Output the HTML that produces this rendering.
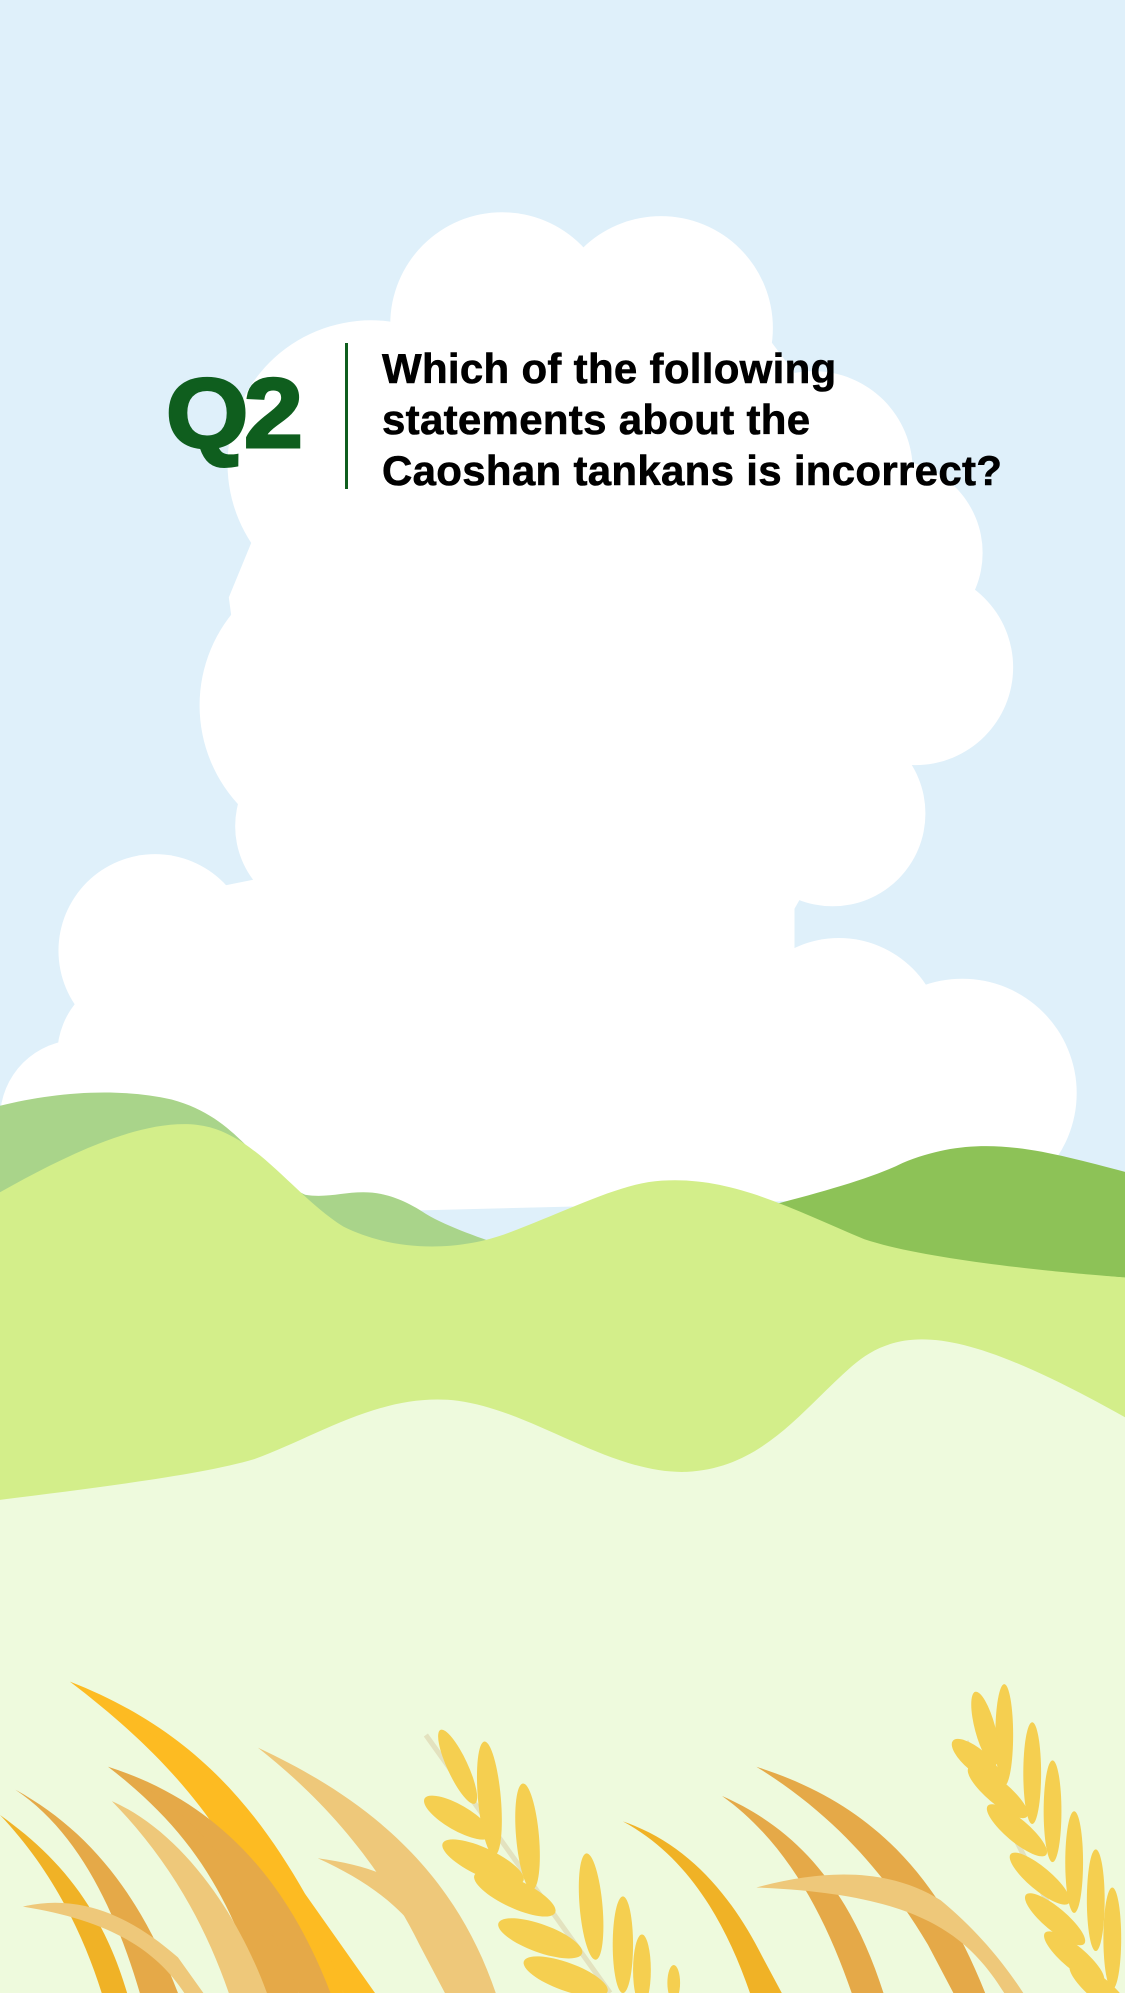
<!DOCTYPE html>
<html><head><meta charset="utf-8"><style>
html,body{margin:0;padding:0;background:#dff0fa}
.wrap{position:relative;width:1125px;height:1993px;overflow:hidden}
svg{position:absolute;left:0;top:0}
.q{position:absolute;left:166px;top:364px;font-family:"Liberation Sans",sans-serif;font-weight:900;font-size:98px;color:#0f5e1e;letter-spacing:-4px;line-height:1;transform:scaleX(1.08);transform-origin:left top;-webkit-text-stroke:3px #0f5e1e}
.bar{position:absolute;left:345px;top:343px;width:3px;height:146px;background:#0f5e1e}
.t{position:absolute;left:382px;top:343px;font-family:"Liberation Sans",sans-serif;font-weight:bold;font-size:42px;line-height:51px;color:#000;letter-spacing:0.3px;-webkit-text-stroke:0.6px #000}
</style></head><body><div class="wrap">
<svg width="1125" height="1993" viewBox="0 0 885 1568" preserveAspectRatio="none">
<rect width="885" height="1568" fill="#dff0fa"/>
<g fill="#fff">
<circle cx="395" cy="255" r="88"/><circle cx="520" cy="258" r="88"/>
<circle cx="292" cy="365" r="113"/><circle cx="640" cy="370" r="78"/>
<circle cx="700" cy="435" r="73"/><circle cx="720" cy="525" r="77"/>
<circle cx="655" cy="640" r="73"/><circle cx="272" cy="555" r="115"/>
<circle cx="255" cy="650" r="70"/><circle cx="122" cy="748" r="76"/>
<circle cx="110" cy="830" r="65"/><circle cx="62" cy="880" r="62"/>
<circle cx="757" cy="860" r="90"/><circle cx="660" cy="820" r="82"/>
<path d="M60 800 L160 700 L210 690 L200 620 L180 470 L250 300 L400 220 L600 260 L690 380 L730 520 L690 600 L625 715 L625 760 L700 800 L800 850 L820 940 L20 960 L20 880 Z"/>
</g>
<path d="M0 870 C40 860 90 855 135 865 C190 880 200 920 240 940 C270 945 290 925 335 955 C360 970 400 980 420 990 L420 1100 L0 1100 Z" fill="#a9d48a"/>
<path d="M560 960 C620 945 680 930 710 915 C770 890 820 905 885 922 L885 1020 L560 1020 Z" fill="#8dc257"/>
<path d="M0 938 C50 910 110 880 155 885 C200 890 230 940 270 965 C310 985 360 985 400 970 C440 955 480 935 510 930 C570 922 620 950 680 975 C740 995 885 1005 885 1005 L885 1568 L0 1568 Z" fill="#d3ee8a"/>
<path d="M0 1180 C80 1170 160 1160 200 1148 C250 1130 300 1095 360 1102 C420 1110 480 1160 540 1158 C600 1155 630 1110 670 1075 C710 1040 760 1045 885 1115 L885 1568 L0 1568 Z" fill="#eefadd"/>
<g>
<path d="M55 1323 C150 1360 200 1420 240 1490 L295 1568 L270 1568 C230 1480 190 1420 150 1390 Z" fill="#fdbb22"/>
<path d="M55 1323 C130 1380 170 1430 200 1490 L240 1568 L270 1568 C240 1480 190 1400 55 1323 Z" fill="#fdbb22"/>
<path d="M203 1375 C280 1420 320 1470 350 1540 L370 1568 L385 1568 C350 1490 310 1430 203 1375 Z" fill="#eec87a"/>
<path d="M203 1375 C260 1420 300 1470 330 1530 L350 1568 L390 1568 C360 1480 300 1420 203 1375 Z" fill="#eec87a"/>
<path d="M250 1462 C310 1470 340 1490 370 1540 L360 1568 C330 1510 300 1485 250 1462 Z" fill="#eec87a"/>
<path d="M85 1390 C150 1430 190 1480 220 1540 L235 1568 L260 1568 C230 1490 180 1420 85 1390 Z" fill="#e5a948"/>
<path d="M85 1390 C150 1440 180 1490 205 1568 L235 1568 C200 1480 150 1420 85 1390 Z" fill="#e5a948"/>
<path d="M88 1417 C130 1460 160 1510 180 1568 L210 1568 C185 1500 140 1440 88 1417 Z" fill="#eec87a"/>
<path d="M12 1408 C60 1440 90 1500 110 1568 L140 1568 C110 1490 70 1440 12 1408 Z" fill="#e5a948"/>
<path d="M0 1428 C40 1470 65 1520 80 1568 L100 1568 C80 1500 45 1460 0 1428 Z" fill="#f0b226"/>
<path d="M18 1500 C60 1490 100 1505 140 1540 L160 1568 L145 1568 C120 1530 80 1510 18 1500 Z" fill="#eec87a"/>
<path d="M490 1433 C540 1450 575 1490 600 1540 L615 1568 L590 1568 C570 1510 540 1460 490 1433 Z" fill="#f0b226"/>
<path d="M568 1413 C620 1450 650 1510 670 1568 L695 1568 C670 1490 630 1440 568 1413 Z" fill="#e5a948"/>
<path d="M595 1390 C660 1430 700 1480 730 1530 L750 1568 L775 1568 C740 1480 690 1420 595 1390 Z" fill="#e5a948"/>
<path d="M595 1485 C650 1470 700 1470 740 1495 C770 1520 790 1545 805 1568 L790 1568 C760 1520 720 1490 595 1485 Z" fill="#eec87a"/>
<path d="M335 1365 L480 1568" stroke="#e3e2bf" stroke-width="4"/>
<path d="M760 1370 L860 1568" stroke="#e3e2bf" stroke-width="4"/>
<g fill="#f5cf50">
<ellipse cx="385" cy="1415" rx="9" ry="45" transform="rotate(-5 385 1415)"/>
<ellipse cx="415" cy="1445" rx="9" ry="42" transform="rotate(-5 415 1445)"/>
<ellipse cx="465" cy="1500" rx="9" ry="42" transform="rotate(-5 465 1500)"/>
<ellipse cx="490" cy="1530" rx="8" ry="38"/>
<ellipse cx="505" cy="1550" rx="7" ry="28"/>
<ellipse cx="530" cy="1560" rx="5" ry="14"/>
<ellipse cx="360" cy="1390" rx="8" ry="32" transform="rotate(-25 360 1390)"/>
<ellipse cx="360" cy="1430" rx="30" ry="10" transform="rotate(30 360 1430)"/>
<ellipse cx="380" cy="1465" rx="35" ry="11" transform="rotate(25 380 1465)"/>
<ellipse cx="405" cy="1490" rx="35" ry="11" transform="rotate(25 405 1490)"/>
<ellipse cx="425" cy="1525" rx="35" ry="11" transform="rotate(20 425 1525)"/>
<ellipse cx="445" cy="1555" rx="35" ry="11" transform="rotate(20 445 1555)"/>
<ellipse cx="790" cy="1365" rx="7" ry="40"/>
<ellipse cx="812" cy="1395" rx="7" ry="40"/>
<ellipse cx="828" cy="1425" rx="7" ry="40"/>
<ellipse cx="845" cy="1465" rx="7" ry="40"/>
<ellipse cx="862" cy="1495" rx="7" ry="40"/>
<ellipse cx="875" cy="1525" rx="7" ry="40"/>
<ellipse cx="775" cy="1360" rx="8" ry="30" transform="rotate(-15 775 1360)"/>
<ellipse cx="768" cy="1385" rx="24" ry="9" transform="rotate(40 768 1385)"/>
<ellipse cx="785" cy="1410" rx="30" ry="9" transform="rotate(40 785 1410)"/>
<ellipse cx="800" cy="1440" rx="30" ry="9" transform="rotate(40 800 1440)"/>
<ellipse cx="818" cy="1478" rx="30" ry="9" transform="rotate(40 818 1478)"/>
<ellipse cx="830" cy="1510" rx="30" ry="9" transform="rotate(40 830 1510)"/>
<ellipse cx="845" cy="1540" rx="30" ry="9" transform="rotate(40 845 1540)"/>
<ellipse cx="865" cy="1565" rx="30" ry="9" transform="rotate(40 865 1565)"/>
</g>
</g>
</svg>
<div class="q">Q2</div>
<div class="bar"></div>
<div class="t">Which of the following<br>statements about the<br>Caoshan tankans is incorrect?</div>
</div></body></html>
